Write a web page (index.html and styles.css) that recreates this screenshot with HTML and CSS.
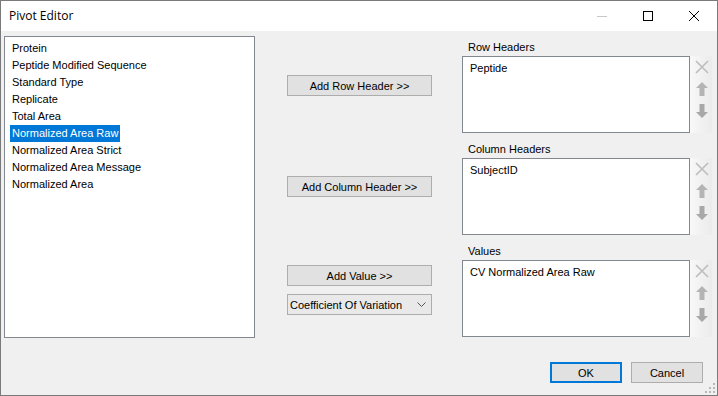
FILE: index.html
```html
<!DOCTYPE html>
<html lang="en">
<head>
  <meta charset="UTF-8" />
  <title>Pivot Editor</title>
  <link rel="stylesheet" href="styles.css">
</head>
<body>

  <div class="window">

    <!-- Title bar -->
    <div class="titlebar">
      <span class="title">Pivot Editor</span>
      <div class="caption-buttons">
        <div class="cap-btn">
          <svg width="10" height="10" viewBox="0 0 10 10"><path d="M0 5.5 H10" stroke="#c8c8c8" stroke-width="1"/></svg>
        </div>
        <div class="cap-btn">
          <svg width="10" height="10" viewBox="0 0 10 10"><rect x="0.5" y="0.5" width="9" height="9" fill="none" stroke="#000" stroke-width="1"/></svg>
        </div>
        <div class="cap-btn">
          <svg width="10" height="10" viewBox="0 0 10 10"><path d="M0 0 L10 10 M10 0 L0 10" stroke="#000" stroke-width="1"/></svg>
        </div>
      </div>
    </div>

    <div class="content">

      <!-- Available columns -->
      <ul class="listbox source-list">
        <li>Protein</li>
        <li>Peptide Modified Sequence</li>
        <li>Standard Type</li>
        <li>Replicate</li>
        <li>Total Area</li>
        <li><span class="selected">Normalized Area Raw</span></li>
        <li>Normalized Area Strict</li>
        <li>Normalized Area Message</li>
        <li>Normalized Area</li>
      </ul>

      <!-- Middle buttons -->
      <div class="actions">
        <button class="btn btn-row">Add Row Header &gt;&gt;</button>
        <button class="btn btn-col">Add Column Header &gt;&gt;</button>
        <button class="btn btn-val">Add Value &gt;&gt;</button>
        <div class="combo">
          <span>Coefficient Of Variation</span>
          <svg width="9" height="6" viewBox="0 0 9 6"><path d="M0.5 0.5 L4.5 4.5 L8.5 0.5" fill="none" stroke="#555" stroke-width="1"/></svg>
        </div>
      </div>

      <!-- Targets -->
      <div class="targets">
        <div class="section">
          <div class="section-label">Row Headers</div>
          <div class="section-body">
            <ul class="listbox target-list"><li>Peptide</li></ul>
            <div class="tools">
              <div class="tool"><svg width="14" height="14" viewBox="0 0 14 14"><path d="M1 1 L13 13 M13 1 L1 13" stroke="#bdbdbd" stroke-width="1.6"/></svg></div>
              <div class="tool"><svg width="12" height="14" viewBox="0 0 12 14"><path d="M6 0 L12 6 L8.5 6 L8.5 14 L3.5 14 L3.5 6 L0 6 Z" fill="#b4b4b4"/></svg></div>
              <div class="tool"><svg width="12" height="14" viewBox="0 0 12 14"><path d="M6 14 L12 8 L8.5 8 L8.5 0 L3.5 0 L3.5 8 L0 8 Z" fill="#a8a8a8"/></svg></div>
            </div>
          </div>
        </div>

        <div class="section">
          <div class="section-label">Column Headers</div>
          <div class="section-body">
            <ul class="listbox target-list"><li>SubjectID</li></ul>
            <div class="tools">
              <div class="tool"><svg width="14" height="14" viewBox="0 0 14 14"><path d="M1 1 L13 13 M13 1 L1 13" stroke="#bdbdbd" stroke-width="1.6"/></svg></div>
              <div class="tool"><svg width="12" height="14" viewBox="0 0 12 14"><path d="M6 0 L12 6 L8.5 6 L8.5 14 L3.5 14 L3.5 6 L0 6 Z" fill="#b4b4b4"/></svg></div>
              <div class="tool"><svg width="12" height="14" viewBox="0 0 12 14"><path d="M6 14 L12 8 L8.5 8 L8.5 0 L3.5 0 L3.5 8 L0 8 Z" fill="#a8a8a8"/></svg></div>
            </div>
          </div>
        </div>

        <div class="section">
          <div class="section-label">Values</div>
          <div class="section-body">
            <ul class="listbox target-list"><li>CV Normalized Area Raw</li></ul>
            <div class="tools">
              <div class="tool"><svg width="14" height="14" viewBox="0 0 14 14"><path d="M1 1 L13 13 M13 1 L1 13" stroke="#bdbdbd" stroke-width="1.6"/></svg></div>
              <div class="tool"><svg width="12" height="14" viewBox="0 0 12 14"><path d="M6 0 L12 6 L8.5 6 L8.5 14 L3.5 14 L3.5 6 L0 6 Z" fill="#b4b4b4"/></svg></div>
              <div class="tool"><svg width="12" height="14" viewBox="0 0 12 14"><path d="M6 14 L12 8 L8.5 8 L8.5 0 L3.5 0 L3.5 8 L0 8 Z" fill="#a8a8a8"/></svg></div>
            </div>
          </div>
        </div>
      </div>

    </div>

    <!-- Footer -->
    <div class="footer">
      <button class="btn btn-ok">OK</button>
      <button class="btn btn-cancel">Cancel</button>
    </div>

    <!-- Resize grip -->
    <svg class="grip" width="10" height="10" viewBox="0 0 10 10">
      <rect x="8" y="0" width="2" height="2" fill="#b8b8b8"/>
      <rect x="4" y="4" width="2" height="2" fill="#b8b8b8"/>
      <rect x="8" y="4" width="2" height="2" fill="#b8b8b8"/>
      <rect x="0" y="8" width="2" height="2" fill="#b8b8b8"/>
      <rect x="4" y="8" width="2" height="2" fill="#b8b8b8"/>
      <rect x="8" y="8" width="2" height="2" fill="#b8b8b8"/>
    </svg>

  </div>

</body>
</html>
```

FILE: styles.css
```css
  body {
    margin: 0;
    background: #f0f0f0;
    font-family: "Liberation Sans", Arial, sans-serif;
    font-size: 11px;
    color: #000;
  }

  .window {
    position: relative;
    box-sizing: border-box;
    width: 718px;
    height: 396px;
    border: 1px solid #7a7a7a;
    background: #f0f0f0;
    overflow: hidden;
  }

  /* Title bar */
  .titlebar {
    height: 30px;
    background: #fff;
    display: flex;
    align-items: center;
  }

  .title {
    font-family: "Open Sans", "Noto Sans", sans-serif;
    font-size: 12px;
    margin-left: 8px;
    margin-top: -1px;
  }

  .caption-buttons {
    margin-left: auto;
    display: flex;
    height: 100%;
  }

  .cap-btn {
    width: 46px;
    display: flex;
    align-items: center;
    justify-content: center;
  }

  /* Content */
  .content {
    display: flex;
    padding: 5px 0 0 3px;
  }

  .listbox {
    list-style: none;
    margin: 0;
    padding: 3px 0 0 0;
    background: #fff;
    border: 1px solid #828790;
    box-sizing: border-box;
  }

  .listbox li {
    height: 17px;
    line-height: 17px;
    padding-left: 7px;
    white-space: nowrap;
  }

  .source-list {
    width: 251px;
    height: 302px;
  }

  .source-list .selected {
    display: inline-block;
    background: #0078d7;
    color: #fff;
    margin-left: -2px;
    padding: 0 2px;
    width: 106px;
  }

  /* Middle column */
  .actions {
    display: flex;
    flex-direction: column;
    width: 145px;
    margin-left: 32px;
  }

  .btn {
    font-family: "Liberation Sans", Arial, sans-serif;
    font-size: 11px;
    height: 21px;
    padding: 0;
    background: #e1e1e1;
    border: 1px solid #adadad;
    color: #000;
  }

  .btn-row { margin-top: 39px; }
  .btn-col { margin-top: 80px; }
  .btn-val { margin-top: 68px; }

  .combo {
    margin-top: 8px;
    height: 21px;
    box-sizing: border-box;
    border: 1px solid #adadad;
    background: #e9e9e9;
    display: flex;
    align-items: center;
    justify-content: space-between;
    padding: 0 5px 0 2px;
  }

  /* Right column */
  .targets {
    margin-left: 30px;
    display: flex;
    flex-direction: column;
  }

  .section {
    margin-top: 10px;
  }

  .section:first-child {
    margin-top: 5px;
  }

  .section-label {
    height: 15px;
    line-height: 13px;
    padding-left: 6px;
  }

  .section-body {
    display: flex;
  }

  .target-list {
    width: 228px;
    height: 77px;
    padding-top: 3px;
  }

  .target-list li {
    padding-left: 7px;
  }

  .tools {
    width: 22px;
    height: 77px;
    background: linear-gradient(to right, #f8f8f8, #ebebeb);
    display: flex;
    flex-direction: column;
    align-items: center;
    padding-top: 4px;
    box-sizing: border-box;
  }

  .tool {
    height: 22px;
    display: flex;
    align-items: flex-start;
    justify-content: center;
    padding-left: 2px;
  }

  /* Footer */
  .footer {
    display: flex;
    justify-content: flex-end;
    gap: 9px;
    padding: 24px 14px 0 0;
  }

  .btn-ok,
  .btn-cancel {
    width: 72px;
  }

  .btn-ok {
    border: 2px solid #0078d7;
  }

  .grip {
    position: absolute;
    right: 2px;
    bottom: 2px;
  }
```
